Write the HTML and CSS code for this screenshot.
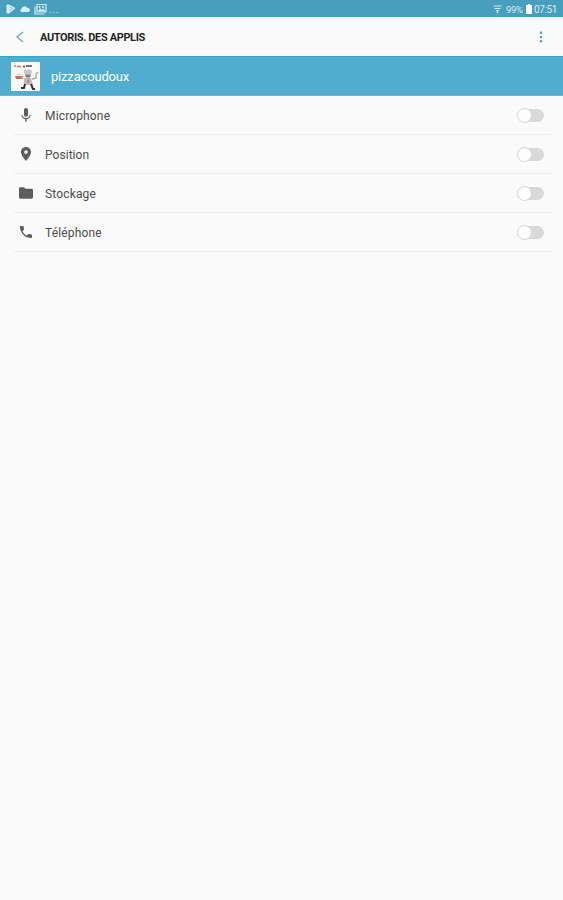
FILE: index.html
```html
<!DOCTYPE html>
<html lang="fr">
<head>
    <meta charset="UTF-8">
    <meta name="viewport" content="width=device-width, initial-scale=1.0">
    <title>Autoris. des applis</title>
    <link rel="stylesheet" href="styles.css">
</head>
<body>
    <div class="status">
        <svg class="status-play" width="10" height="10" viewBox="0 0 10 10"><path d="M0.500 0.500L3 0.500L9.500 4L7.500 6L3 9.500H0.500Z"/><path class="cut" d="M3.500 2.500L6 4.500L4 7"/></svg>
        <svg class="status-cloud" width="12" height="8" viewBox="0 0 12 8"><path d="M2.500 7a2 2 0 0 1 0-3.500A3.200 3.200 0 0 1 8.500 3A2 2 0 0 1 9.500 7Z"/></svg>
        <svg class="status-photo" width="13" height="12" viewBox="0 0 13 12"><path class="line" d="M3 1.500h9v7.500H3zM1 3.500v7.500h9.500"/><path d="M4 8.500l2-3.500 2 2 1.500-1.500L11.500 8.500z"/><circle cx="5.500" cy="4" r="1"/><circle cx="9" cy="4" r="1"/></svg>
        <span class="dots">...</span>
        <div class="status-right">
            <svg width="9" height="9" viewBox="0 0 9 9"><path class="line" d="M0.500 1h8M1.500 3.500h6M3 5.500h3M4.500 5.500v3"/></svg>
            <span class="percent">99%</span>
            <svg class="battery" width="6" height="10" viewBox="0 0 6 10"><path d="M2 0h2v1h2v9H0V1h2z"/></svg>
            <span class="time">07:51</span>
        </div>
    </div>

    <div class="header">
        <svg class="back" width="10" height="12" viewBox="0 0 10 12"><path d="M8 1L2 6L8 11"/></svg>
        <h1>AUTORIS. DES APPLIS</h1>
        <svg class="more" width="4" height="12" viewBox="0 0 4 12"><circle cx="2" cy="1.700" r="1.200"/><circle cx="2" cy="6" r="1.200"/><circle cx="2" cy="10.300" r="1.200"/></svg>
    </div>

    <div class="app">
        <svg class="app-icon" width="29" height="29" viewBox="0 0 29 29">
            <rect width="29" height="29" fill="#fbfafa"/>
            <path d="M3 4h2M6 4.500h4" stroke="#e36b62" stroke-width="1.500"/>
            <path d="M12 4.500h2M15 4h6" stroke="#4c4547" stroke-width="1.700"/>
            <path d="M5 13q3-3 7 0" fill="#f0c9b7"/>
            <path d="M4 14h8l-1 3H5z" fill="#d66c49"/>
            <path d="M12 17L10 15M21 17l4-1v-4M25 12l2-2" stroke="#aaa" stroke-width="1.500" fill="none"/>
            <path d="M13 16h7l2 7h-9z" fill="#bdbdbd"/>
            <circle cx="17" cy="13" r="3" fill="#aaa5a2"/>
            <path d="M13 11q-1-4 3-3q4-2 5 2l-1 2h-6z" fill="#c5c7c8"/>
            <path d="M15 14h4" stroke="#555" stroke-width="1"/>
            <path d="M17 16l-1 5 2-1z" fill="#d45b55"/>
            <path d="M14 22l-1 4h-3M20 22l2 5h2" stroke="#333" stroke-width="2" fill="none"/>
        </svg>
        <span>pizzacoudoux</span>
    </div>

    <div class="list">
        <div class="row">
            <svg class="icon" width="16" height="16" viewBox="0 0 24 24"><path d="M12 14.500c1.700 0 3-1.300 3-3V4.500c0-1.700-1.300-3-3-3s-3 1.300-3 3v7c0 1.700 1.300 3 3 3zm5.500-3c0 3-2.500 5-5.500 5s-5.500-2-5.500-5H5c0 3.400 2.700 6.200 6 6.700V22h2v-3.800c3.300-.5 6-3.300 6-6.700z"/></svg>
            <span>Microphone</span>
            <div class="switch"></div>
        </div>
        <div class="row">
            <svg class="icon" width="16" height="16" viewBox="0 0 24 24"><path d="M12 1.500c-4.200 0-7.500 3.300-7.500 7.500C4.500 14.500 12 22.500 12 22.500S19.500 14.500 19.500 9c0-4.200-3.300-7.500-7.500-7.500zm0 10.300a2.800 2.800 0 1 1 0-5.600 2.800 2.800 0 0 1 0 5.600z"/></svg>
            <span class="position">Position</span>
            <div class="switch"></div>
        </div>
        <div class="row">
            <svg class="icon" width="16" height="16" viewBox="0 0 24 24"><path d="M9 3.500H3.500c-1.100 0-2 .9-2 2v13c0 1.100.9 2 2 2h17c1.100 0 2-.9 2-2v-11c0-1.100-.9-2-2-2H11z"/></svg>
            <span>Stockage</span>
            <div class="switch"></div>
        </div>
        <div class="row">
            <svg class="icon" width="16" height="16" viewBox="0 0 24 24"><path d="M6.600 10.800c1.400 2.800 3.800 5.100 6.600 6.600l2.200-2.200c.3-.3.700-.4 1-.2 1.100.4 2.300.6 3.600.6.600 0 1 .4 1 1V20c0 .6-.4 1-1 1C10.600 21 3 13.400 3 4c0-.6.400-1 1-1h3.500c.6 0 1 .4 1 1 0 1.300.2 2.500.6 3.600.1.300 0 .7-.3 1z"/></svg>
            <span>Téléphone</span>
            <div class="switch"></div>
        </div>
    </div>
</body>
</html>
```
FILE: styles.css
```css
body {
    margin: 0;
    min-height: 900px;
    background: #fafafa;
    font-family: Roboto, sans-serif;
    color: #4c4c4c;
}
svg {
    display: block;
    flex: none;
}
.status {
    display: flex;
    align-items: center;
    height: 17px;
    box-sizing: border-box;
    padding: 1px 6px 0;
    background: #479fbd;
    color: #d5edf5;
    fill: #d5edf5;
    font-size: 10px;
}
.status-cloud {
    margin-left: 3px;
}
.status-photo {
    margin-left: 3px;
}
.line {
    fill: none;
    stroke: #d5edf5;
    stroke-width: 1.2;
}
.cut {
    fill: none;
    stroke: #79b9d0;
}
.dots {
    margin-left: 2px;
    opacity: 0.8;
    letter-spacing: 0.7px;
}
.status-right {
    display: flex;
    align-items: center;
    margin-left: auto;
}
.percent {
    width: 17px;
    margin-left: 4px;
    font-size: 9.5px;
    letter-spacing: -0.4px;
}
.battery {
    margin-left: 3px;
    fill: #fff;
}
.time {
    width: 23px;
    margin-left: 2px;
    letter-spacing: -0.4px;
}
.header {
    display: flex;
    align-items: center;
    height: 39px;
    box-sizing: border-box;
    padding: 1px 20px 0 15px;
}
.back {
    fill: none;
    stroke: #68abc0;
    stroke-width: 1.4;
}
h1 {
    margin: 0 0 0 15px;
    color: #252525;
    font-size: 11px;
    font-weight: 700;
    letter-spacing: -0.38px;
    white-space: nowrap;
}
.more {
    margin-left: auto;
    fill: #479fbd;
}
.app {
    display: flex;
    align-items: center;
    height: 40px;
    box-sizing: border-box;
    padding-left: 11px;
    border-top: 1px solid #36a3c6;
    border-bottom: 1px solid #66b8d7;
    background: #50add0;
    color: #fff;
    font-size: 13px;
    letter-spacing: -0.18px;
}
.app-icon {
    margin-right: 11px;
}
.list {
    padding: 0 12px 0 14px;
}
.row {
    display: flex;
    align-items: center;
    height: 39px;
    box-sizing: border-box;
    padding: 0 7px 0 4px;
    border-bottom: 1px solid #ededed;
    font-size: 12px;
    letter-spacing: 0.15px;
}
.row span {
    padding-top: 2px;
}
.row .position {
    letter-spacing: 0.05px;
}
.icon {
    margin-right: 11px;
    fill: #5d5d5d;
}
.switch {
    width: 26px;
    height: 13px;
    margin-left: auto;
    border-radius: 7px;
    background: #d9d9d9;
}
.switch::before {
    content: "";
    display: block;
    width: 13px;
    height: 13px;
    margin: -1px;
    border: 1px solid #d6d6d6;
    border-radius: 50%;
    background: #fdfdfd;
}
```
